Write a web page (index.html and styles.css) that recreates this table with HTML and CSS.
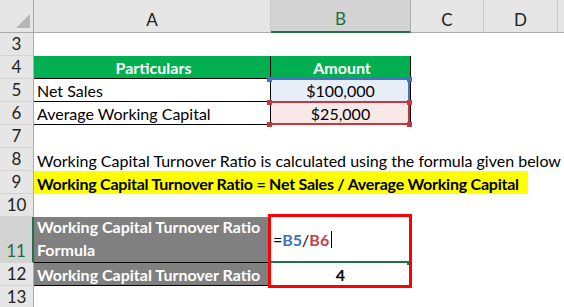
FILE: index.html
```html
<!DOCTYPE html>
<html>
<head>
<meta charset="utf-8">
<link rel="stylesheet" href="styles.css">
</head>
<body>
<div class="sheet">
  <div class="corner"><svg width="16" height="16" viewBox="0 0 16 16"><polygon points="15,1 15,15 1,15" fill="#b5b5b5"/></svg></div>
  <div class="colhead">A</div>
  <div class="colhead sel">B</div>
  <div class="colhead">C</div>
  <div class="colhead">D</div>
  <div class="colhead edge"></div>

  <div class="rowhead">3</div><div class="cell"></div><div class="cell"></div><div class="cell"></div><div class="cell"></div><div class="cell"></div>

  <div class="rowhead">4</div><div class="cell t hdr tl">Particulars</div><div class="cell t hdr">Amount</div><div class="cell"></div><div class="cell"></div><div class="cell"></div>

  <div class="rowhead">5</div><div class="cell t">Net Sales</div><div class="cell t num blue">$100,000</div><div class="cell"></div><div class="cell"></div><div class="cell"></div>

  <div class="rowhead">6</div><div class="cell t">Average Working Capital</div><div class="cell t num red">$25,000</div><div class="cell"></div><div class="cell"></div><div class="cell"></div>

  <div class="rowhead">7</div><div class="cell wide"></div>

  <div class="rowhead">8</div><div class="cell wide txt">Working Capital Turnover Ratio is calculated using the formula given below</div>

  <div class="rowhead">9</div><div class="cell wide"><span class="yellow">Working Capital Turnover Ratio = Net Sales / Average Working Capital</span></div>

  <div class="rowhead">10</div><div class="cell wide"></div>

  <div class="rowhead active">11</div><div class="cell t gray wrap">Working Capital Turnover Ratio Formula</div><div class="cell t formula"><span>=</span><span class="ref-b">B5</span><span>/</span><span class="ref-r">B6</span><span class="caret"></span></div><div class="cell"></div><div class="cell"></div><div class="cell"></div>

  <div class="rowhead">12</div><div class="cell t gray">Working Capital Turnover Ratio</div><div class="cell t result">4</div><div class="cell"></div><div class="cell"></div><div class="cell"></div>

  <div class="rowhead">13</div><div class="cell wide"></div>

  <div class="sel-box sel-blue"><i class="h tl"></i><i class="h tr"></i></div>
  <div class="sel-box sel-red"><i class="h tl"></i><i class="h tr"></i><i class="h bl"></i><i class="h br"></i></div>
  <div class="edit-line"><i class="h br"></i></div>
  <div class="red-frame"></div>
</div>
</body>
</html>
```

FILE: styles.css
```css
* { box-sizing: border-box; }
html, body { margin: 0; padding: 0; background: #fff; }
body { width: 564px; height: 307px; overflow: hidden; font-family: Lato, "Open Sans", sans-serif; font-size: 16px; color: #000; }

.sheet {
  position: relative;
  display: grid;
  grid-template-columns: 34px 237px 140px 73px 74px 6px;
  grid-template-rows: 33px repeat(8, 23px) 46px 23px 23px;
}

.corner { background: #e6e6e6; border-right: 1px solid #ababab; border-bottom: 1px solid #ababab; display: flex; align-items: flex-end; justify-content: flex-end; padding: 0 2px 3px 0; }
.corner svg { display: block; }

.colhead { background: #e6e6e6; border-bottom: 1px solid #ababab; border-right: 1px solid #c9c9c9; display: flex; align-items: center; justify-content: center; padding-top: 6px; font-size: 17px; color: #222; }
.colhead.sel { background: #d3d3d3; color: #1e6b41; border-bottom: 2px solid #217346; border-right-color: #ababab; }
.colhead.edge { border-right: none; }

.rowhead { background: #e6e6e6; border-right: 1px solid #ababab; border-bottom: 1px solid #d4d4d4; display: flex; align-items: flex-end; justify-content: center; padding-bottom: 1px; font-size: 17px; color: #222; }
.rowhead.active { background: #d3d3d3; color: #1e6b41; border-right: 2px solid #217346; }

.cell { display: flex; align-items: flex-end; padding: 0 0 1px 3px; white-space: nowrap; }
.wide { grid-column: 2 / 7; }
.t { border-right: 1px solid #000; border-bottom: 1px solid #000; }
.hdr { background: #00b050; color: #fff; font-weight: bold; justify-content: center; }
.num { justify-content: center; padding-left: 0; }
.blue { background: #e8eef8; }
.red { background: #f9e8e8; }
.yellow { background: #ffff00; font-weight: bold; letter-spacing: -0.24px; width: 494px; margin-left: -3px; padding-left: 3px; height: 23px; display: flex; align-items: flex-end; padding-bottom: 1px; }
.wide:has(.yellow) { padding-bottom: 0; }

.gray { background: #808080; color: #fff; font-weight: bold; }
.wrap { white-space: normal; line-height: 23px; align-items: flex-end; padding-right: 0; }
.formula { align-items: center; padding-left: 2px; padding-bottom: 0; }
.formula .ref-b { color: #3d72c7; font-weight: bold; }
.formula .ref-r { color: #c4404b; font-weight: bold; }
.caret { display: inline-block; width: 1px; height: 17px; background: #000; margin-left: 2px; }
.result { justify-content: center; font-weight: bold; padding-left: 0; }

.sel-box { position: absolute; left: 270px; width: 140px; height: 24px; }
.sel-blue { top: 78px; border-top: 2px solid #4472c4; border-right: 2px solid #4472c4; }
.sel-red { top: 101px; border: 2px solid #c0393f; border-left: none; }
.h { position: absolute; width: 5px; height: 5px; }
.sel-blue .h { background: #4472c4; }
.sel-red .h { background: #c0393f; }
.h.tl { left: -3px; top: -3px; }
.h.tr { right: -4px; top: -3px; }
.h.bl { left: -3px; bottom: -4px; }
.h.br { right: -4px; bottom: -4px; }

.edit-line { position: absolute; left: 270px; top: 261px; width: 137px; height: 2px; background: #217346; }
.edit-line .h { background: #217346; right: -4px; bottom: -2px; width: 4px; height: 4px; }

.red-frame { position: absolute; left: 268px; top: 214px; width: 144px; height: 74px; border: 3px solid #ff0000; }
```
